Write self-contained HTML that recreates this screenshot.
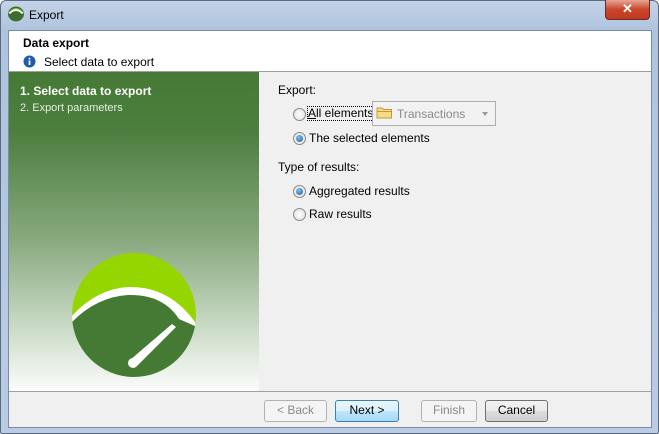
<!DOCTYPE html>
<html><head><style>
body{margin:0;width:659px;height:434px;overflow:hidden;font-family:"Liberation Sans",Tahoma,sans-serif;font-size:12px;background:#fff}
.frame{position:absolute;left:0;top:0;width:657px;height:432px;border:1px solid #5a6a80;border-radius:6px 6px 2px 2px;background:linear-gradient(#c4d4e8,#aec3dd 30px,#b9cce4);}
.title{position:absolute;left:29px;top:8px;font-size:12px;color:#000}
.close{position:absolute;left:605px;top:0;width:43px;height:19px;background:linear-gradient(#e8a594,#c9452c 50%,#c0391e);border:1px solid #6b2b22;border-top:none;border-radius:0 0 4px 4px;color:#fff;text-align:center;font-weight:bold;font-size:13px;line-height:18px}
.inner{position:absolute;left:8px;top:30px;width:642px;height:396px;background:#f0f0f0;border:1px solid #7a8ba3}
.head{position:absolute;left:0;top:0;width:642px;height:40px;background:#fff;border-bottom:1px solid #a0a0a0}
.left{position:absolute;left:0;top:41px;width:250px;height:319px;background:linear-gradient(#457a35 0px,#4d7e3f 60px,#8aaa80 170px,#c6d8c2 250px,#fbfcfb 319px)}
.sep{position:absolute;left:0;top:360px;width:642px;border-top:1px solid #a0a0a0}
.btn{position:absolute;top:369px;height:20px;border:1px solid #707070;border-radius:3px;background:linear-gradient(#f2f2f2,#ebebeb 50%,#dddddd 51%,#cfcfcf);text-align:center;line-height:19px;font-size:12px}
.dis{border-color:#adb2b5;color:#8a8a8a;background:#f4f4f4}
.radio{position:absolute;width:11px;height:11px;border-radius:50%;border:1px solid #8a8a8a;background:radial-gradient(#fff,#dcdcdc)}
.radio.on::after{content:"";position:absolute;left:2px;top:2px;width:7px;height:7px;border-radius:50%;background:radial-gradient(circle at 40% 35%,#7ec0ee,#1d5f9a)}
.t{position:absolute;white-space:nowrap}
</style></head><body>
<div class="frame"></div>
<svg style="position:absolute;left:7px;top:6px" width="18" height="16"><ellipse cx="9" cy="8" rx="8" ry="7.5" fill="#3d6d2f"/><path d="M1.5 7 Q9 -1 16.5 7 L15 8 Q9 2 3 8Z" fill="#fff"/><path d="M1 7 Q9 -3 17 7 L16.5 6 Q9 0 1.5 6Z" fill="#8ccf00"/></svg>
<div class="title">Export</div>
<div class="close">✕</div>
<div class="inner">
 <div class="head">
  <div class="t" style="left:14px;top:5px;font-weight:bold">Data export</div>
  <svg style="position:absolute;left:14px;top:24px" width="13" height="13"><circle cx="6.5" cy="6.5" r="6" fill="#1f5aa8"/><rect x="5.6" y="5.5" width="1.8" height="4.5" fill="#fff"/><circle cx="6.5" cy="3.6" r="1" fill="#fff"/></svg>
  <div class="t" style="left:35px;top:24px">Select data to export</div>
 </div>
 <div class="left">
  <div class="t" style="left:11px;top:12px;color:#fff;font-weight:bold">1. Select data to export</div>
  <div class="t" style="left:11px;top:30px;color:#e6eee2;font-size:11px">2. Export parameters</div>
  <svg style="position:absolute;left:62px;top:181px" width="128" height="128">
   <defs><clipPath id="c"><circle cx="63" cy="62" r="62"/></clipPath></defs>
   <g clip-path="url(#c)">
    <rect width="128" height="128" fill="#96d600"/>
    <path d="M0 64 Q25 36 57 34 Q100 33 126 72 L126 128 L0 128Z" fill="#fff"/>
    <path d="M0 70 Q25 44 57 42 Q92 41 108 66 L126 74 L126 128 L0 128Z" fill="#457a35"/>
   </g>
   <path d="M105 74 L66 113 L59 107 L101 71Z" fill="#fff"/>
   <circle cx="62" cy="110" r="5" fill="#fff"/>
  </svg>
 </div>
 <div class="sep"></div>
 <div class="t" style="left:269px;top:52px">Export:</div>
 <div class="radio" style="left:284px;top:77px"></div>
 <div class="t" style="left:299px;top:76px;outline:1px dotted #000;line-height:13px"><u>A</u>ll elements</div>
 <div style="position:absolute;left:363px;top:70px;width:122px;height:23px;border:1px solid #adadad;background:#f2f2f2"></div>
 <svg style="position:absolute;left:367px;top:75px" width="17" height="13"><path d="M1 2 h5 l1.5 1.5 h8 v8.5 h-14.5z" fill="#f6dc86" stroke="#c29a3a"/><path d="M1 5.5 h14.5" stroke="#c29a3a"/></svg>
 <div class="t" style="left:388px;top:76px;color:#8a8a8a">Transactions</div>
 <div style="position:absolute;left:473px;top:81px;border:3px solid transparent;border-top:4px solid #999"></div>
 <div class="radio on" style="left:284px;top:101px"></div>
 <div class="t" style="left:300px;top:100px">The selected elements</div>
 <div class="t" style="left:269px;top:129px">Type of results:</div>
 <div class="radio on" style="left:284px;top:154px"></div>
 <div class="t" style="left:300px;top:153px">Aggregated results</div>
 <div class="radio" style="left:284px;top:177px"></div>
 <div class="t" style="left:300px;top:176px">Raw results</div>
 <div class="btn dis" style="left:255px;width:61px">&lt; Back</div>
 <div class="btn" style="left:326px;width:62px;border-color:#3c7fb1;background:linear-gradient(#eaf6fd,#d9f0fc 50%,#bee6fd 51%,#a7d9f5)">Next &gt;</div>
 <div class="btn dis" style="left:412px;width:54px">Finish</div>
 <div class="btn" style="left:476px;width:61px">Cancel</div>
</div>
</body></html>
